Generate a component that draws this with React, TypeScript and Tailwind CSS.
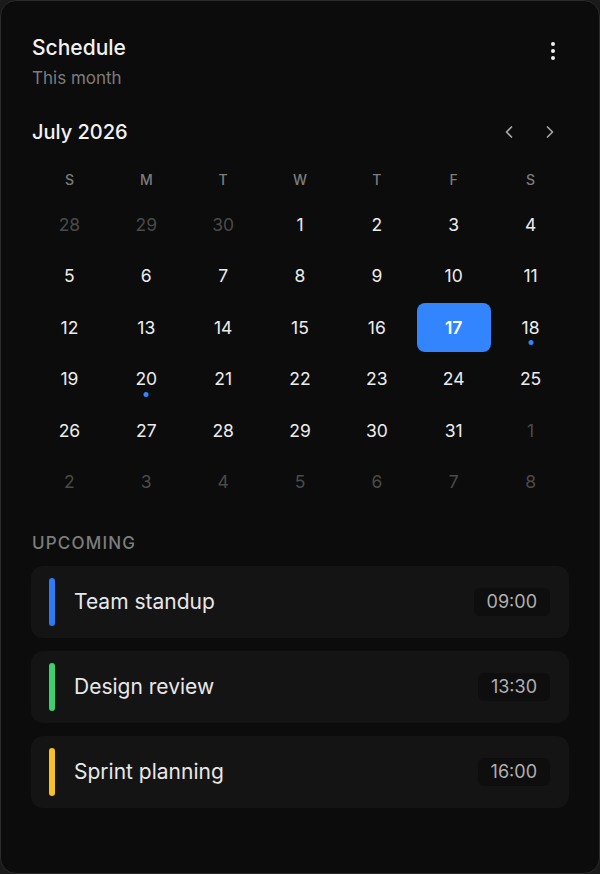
import { ChevronLeft, ChevronRight } from 'lucide-react';

interface Day {
  n: number;
  muted?: boolean;
  selected?: boolean;
  dot?: boolean;
}

interface Event {
  title: string;
  time: string;
  color: string;
}

const weekdays = ['S', 'M', 'T', 'W', 'T', 'F', 'S'];

const weeks: Day[][] = [
  [{ n: 28, muted: true }, { n: 29, muted: true }, { n: 30, muted: true }, { n: 1 }, { n: 2 }, { n: 3 }, { n: 4 }],
  [{ n: 5 }, { n: 6 }, { n: 7 }, { n: 8 }, { n: 9 }, { n: 10 }, { n: 11 }],
  [{ n: 12 }, { n: 13 }, { n: 14 }, { n: 15 }, { n: 16 }, { n: 17, selected: true }, { n: 18, dot: true }],
  [{ n: 19 }, { n: 20, dot: true }, { n: 21 }, { n: 22 }, { n: 23 }, { n: 24 }, { n: 25 }],
  [{ n: 26 }, { n: 27 }, { n: 28 }, { n: 29 }, { n: 30 }, { n: 31 }, { n: 1, muted: true }],
  [{ n: 2, muted: true }, { n: 3, muted: true }, { n: 4, muted: true }, { n: 5, muted: true }, { n: 6, muted: true }, { n: 7, muted: true }, { n: 8, muted: true }],
];

const events: Event[] = [
  { title: 'Team standup', time: '09:00', color: 'bg-[#2f7bf5]' },
  { title: 'Design review', time: '13:30', color: 'bg-[#3ecf6e]' },
  { title: 'Sprint planning', time: '16:00', color: 'bg-[#f6c026]' },
];

function DayCell({ day }: { day: Day }) {
  return (
    <div className="flex h-[51.5px] items-center justify-center">
      <div
        className={`relative flex h-[49px] w-[74px] items-center justify-center rounded-lg text-[17.5px] ${
          day.selected
            ? 'bg-[#3385ff] font-semibold text-white'
            : day.muted
              ? 'text-[#4a4a4a]'
              : 'text-[#ececec]'
        }`}
      >
        {day.n}
        {day.dot && (
          <span className="absolute left-1/2 top-[37px] h-[5px] w-[5px] -translate-x-1/2 rounded-full bg-[#3385ff]" />
        )}
      </div>
    </div>
  );
}

export default function App() {
  return (
    <div
      className="h-[874px] w-[600px] bg-[#1a1a1a]"
      style={{ fontFamily: 'Inter, "Noto Sans", sans-serif' }}
    >
      <div className="flex h-full flex-col rounded-2xl border border-[#2a2a2a] bg-[#0c0c0c] px-[30px] pt-[33px]">
        <div className="flex items-start justify-between pl-[1px]">
          <div>
            <h1 className="text-[21px] font-medium leading-[28px] text-[#f2f2f2]">Schedule</h1>
            <p className="mt-[4px] text-[17px] leading-[24px] text-[#7d7d7d]">This month</p>
          </div>
          <button className="mr-[14px] mt-[8px] flex flex-col gap-[3px]">
            <span className="h-[4px] w-[4px] rounded-full bg-[#f0f0f0]" />
            <span className="h-[4px] w-[4px] rounded-full bg-[#f0f0f0]" />
            <span className="h-[4px] w-[4px] rounded-full bg-[#f0f0f0]" />
          </button>
        </div>

        <div className="mt-[28px] flex items-center justify-between pl-[1px]">
          <h2 className="text-[20px] font-medium leading-[28px] text-[#f2f2f2]">July 2026</h2>
          <div className="mr-[9px] flex items-center gap-[21px] text-[#a8a8a8]">
            <ChevronLeft size={20} strokeWidth={2} />
            <ChevronRight size={20} strokeWidth={2} />
          </div>
        </div>

        <div className="mt-[24px] grid grid-cols-7">
          {weekdays.map((d, i) => (
            <div key={i} className="text-center text-[14px] font-medium leading-[20px] text-[#7d7d7d]">
              {d}
            </div>
          ))}
        </div>

        <div className="mt-[9px] flex flex-col">
          {weeks.map((week, wi) => (
            <div key={wi} className="grid grid-cols-7">
              {week.map((day, di) => (
                <DayCell key={di} day={day} />
              ))}
            </div>
          ))}
        </div>

        <h3 className="mt-[23px] pl-[1px] text-[17px] font-medium uppercase leading-[24px] tracking-[0.07em] text-[#7d7d7d]">
          Upcoming
        </h3>

        <div className="mt-[11px] flex flex-col gap-[13px]">
          {events.map((ev) => (
            <div
              key={ev.title}
              className="flex h-[72px] items-center rounded-xl bg-[#141414] pl-[18px] pr-[19px]"
            >
              <span className={`h-[48px] w-[6px] rounded-full ${ev.color}`} />
              <span className="ml-[19px] flex-1 text-[21px] leading-[28px] text-[#e8e8e8]">{ev.title}</span>
              <span className="rounded-md bg-[#0e0e0e] px-[13px] py-[2px] text-[18px] leading-[24px] text-[#b0b0b0]">
                {ev.time}
              </span>
            </div>
          ))}
        </div>
      </div>
    </div>
  );
}
